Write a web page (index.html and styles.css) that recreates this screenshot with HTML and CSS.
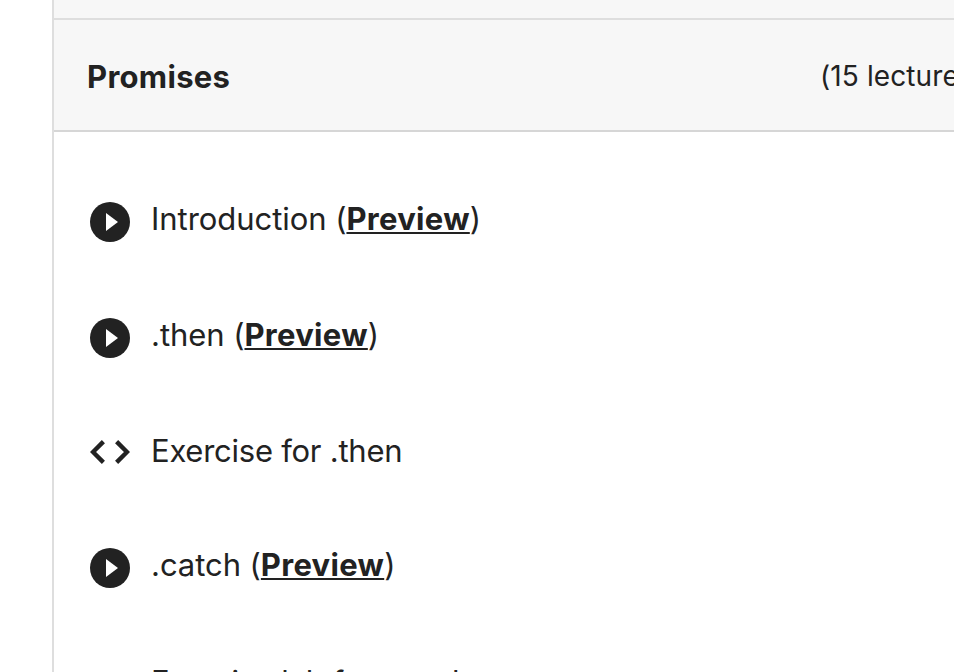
FILE: index.html
```
<!DOCTYPE html>
<html lang="en">

<head>
    <meta charset="UTF-8">
    <meta name="viewport" content="width=device-width, initial-scale=1.0">
    <title>Promises</title>
    <link rel="stylesheet" href="styles.css">
</head>

<body>
    <div class="curriculum">
        <div class="section-spacer"></div>
        <div class="section-header">
            <h2>Promises</h2>
            <span class="section-info">(15 lectures)</span>
        </div>
        <ul class="lectures">
            <li class="lecture">
                <svg class="icon" viewBox="0 0 40 40"><circle cx="20" cy="20" r="20" /><path class="play" d="M16 11v18l12-9z" /></svg>
                <span class="title">Introduction (<a class="preview">Preview</a>)</span>
            </li>
            <li class="lecture">
                <svg class="icon" viewBox="0 0 40 40"><circle cx="20" cy="20" r="20" /><path class="play" d="M16 11v18l12-9z" /></svg>
                <span class="title">.then (<a class="preview">Preview</a>)</span>
            </li>
            <li class="lecture exercise">
                <svg class="icon" viewBox="0 0 40 40"><path class="code" d="M13.4 9.6L3 20l10.4 10.4M26.6 9.6L37 20 26.6 30.4" /></svg>
                <span class="title">Exercise for .then</span>
            </li>
            <li class="lecture">
                <svg class="icon" viewBox="0 0 40 40"><circle cx="20" cy="20" r="20" /><path class="play" d="M16 11v18l12-9z" /></svg>
                <span class="title">.catch (<a class="preview">Preview</a>)</span>
            </li>
            <li class="lecture exercise">
                <svg class="icon" viewBox="0 0 40 40"><path class="code" d="M13.4 9.6L3 20l10.4 10.4M26.6 9.6L37 20 26.6 30.4" /></svg>
                <span class="title">Exercise lab for .catch</span>
            </li>
        </ul>
    </div>
</body>

</html>
```
FILE: styles.css
```
* {
    box-sizing: border-box;
}

body {
    margin: 0;
    background: white;
    color: #222;
    font-family: Inter, "Liberation Sans", sans-serif;
}

.curriculum {
    height: 672px;
    overflow: hidden;
    margin-left: 52px;
    border-left: 2px solid #dedede;
}

.section-spacer {
    height: 20px;
    background: #f7f7f7;
    border-bottom: 2px solid #dedede;
}

.section-header {
    display: flex;
    align-items: center;
    height: 112px;
    padding: 4px 0 0 33px;
    background: #f7f7f7;
    border-bottom: 2px solid #d6d6d6;
}

h2 {
    width: 733px;
    margin: 0;
    flex-shrink: 0;
    font-size: 31px;
    line-height: 40px;
    font-weight: 700;
    letter-spacing: 0.3px;
}

.section-info {
    margin-bottom: 2px;
    font-size: 28px;
    line-height: 40px;
    letter-spacing: 0.1px;
    white-space: nowrap;
}

.lectures {
    margin: 0;
    padding: 32px 0 0 36px;
    list-style: none;
}

.lecture {
    display: flex;
    align-items: center;
    height: 116px;
}

.lecture.exercise {
    height: 114px;
}

.icon {
    width: 40px;
    height: 40px;
    margin-right: 21px;
    fill: #222;
}

.exercise .icon {
    margin-bottom: 2px;
}

.icon .play {
    fill: white;
}

.icon .code {
    fill: none;
    stroke: #222;
    stroke-width: 4.4;
}

.title {
    margin-bottom: 6px;
    font-size: 31px;
    line-height: 40px;
    letter-spacing: -0.05px;
}

.exercise .title {
    margin-bottom: 4px;
    letter-spacing: -0.25px;
}

.lecture:last-child {
    margin-top: 1px;
}

.lecture:last-child .icon {
    margin-bottom: -6px;
}

.preview {
    font-weight: 700;
    letter-spacing: 0.3px;
    text-decoration: underline;
    text-decoration-thickness: 2px;
    text-underline-offset: 2px;
    text-decoration-skip-ink: none;
}
```
